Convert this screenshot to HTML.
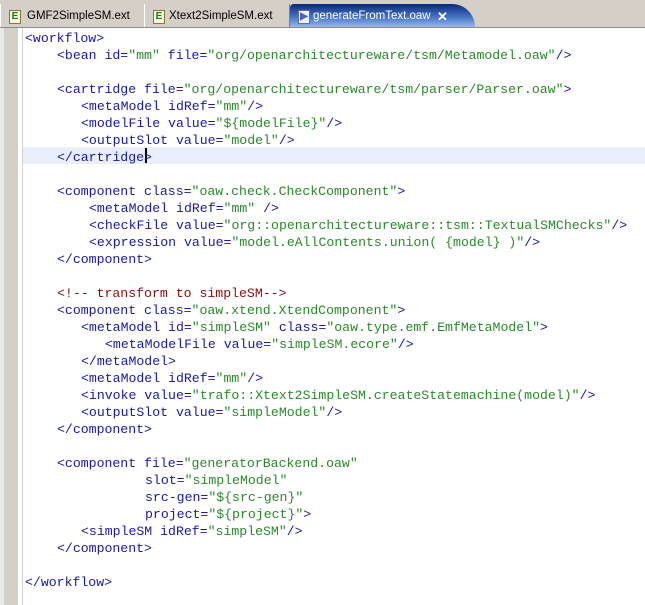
<!DOCTYPE html>
<html><head><style>
body{margin:0;width:645px;height:605px;overflow:hidden;background:#fff;position:relative;font-family:"Liberation Sans",sans-serif}
.tabbar{position:absolute;left:0;top:0;width:645px;height:27px;background:#d4d0c8;border-bottom:1px solid #8a8a8a}
.tab{position:absolute;top:4px;height:23px;font-size:11.5px;line-height:25px;color:#000;border-left:1px solid #fff;border-right:1px solid #808080}
.ico{position:absolute;top:6px;left:8px;width:10px;height:12px;background:#f4f4e0;border:1px solid #8a7a30;font:bold 10px "Liberation Sans";color:#1a7a1a;line-height:12px;text-align:center}
.active{position:absolute;left:290px;top:4px;width:185px;height:23px;background:linear-gradient(#0a2a7a,#4a78c8 60%,#9ab8e8);border-radius:5px 30px 0 0;color:#fff;font-size:11.5px;line-height:25px}
.code{position:absolute;font-family:"Liberation Mono",monospace;font-size:13.2px;white-space:pre;line-height:17px;color:#1a1aa0}
.v{color:#2a8a2a}.c{color:#8a1010}
.l{position:absolute;height:17px}
</style></head><body>
<div class="tabbar">
 <div class="tab" style="left:0;width:143px;"><div class="ico">E</div><span style="position:absolute;left:26px">GMF2SimpleSM.ext</span></div>
 <div class="tab" style="left:144px;width:144px;"><div class="ico">E</div><span style="position:absolute;left:24px">Xtext2SimpleSM.ext</span></div>
 <div class="active"><div class="ico" style="background:#eef;border-color:#6070a0;color:#5060c0">▶</div><span style="position:absolute;left:23px">generateFromText.oaw</span><span style="position:absolute;left:147px;font-weight:bold;font-size:13px">✕</span></div>
</div>
<div style="position:absolute;left:0;top:28px;width:4px;height:577px;background:#e8e8e8"></div>
<div style="position:absolute;left:4px;top:28px;width:14px;height:577px;background:#d4d0c8"></div>
<div style="position:absolute;left:22px;top:28px;width:1px;height:577px;background:#d0d0d0"></div>
<div style="position:absolute;left:23px;top:147px;width:622px;height:17px;background:#e8eefa"></div>
<div style="position:absolute;left:145px;top:148px;width:2px;height:15px;background:#000"></div>
<div class="code" style="left:0;top:30px;width:645px">
<div class="l" style="top:0;left:25px">&lt;workflow&gt;</div>
<div class="l" style="top:17px;left:57px">&lt;bean id=<span class="v">"mm"</span> file=<span class="v">"org/openarchitectureware/tsm/Metamodel.oaw"</span>/&gt;</div>
<div class="l" style="top:51px;left:57px">&lt;cartridge file=<span class="v">"org/openarchitectureware/tsm/parser/Parser.oaw"</span>&gt;</div>
<div class="l" style="top:68px;left:81px">&lt;metaModel idRef=<span class="v">"mm"</span>/&gt;</div>
<div class="l" style="top:85px;left:81px">&lt;modelFile value=<span class="v">"${modelFile}"</span>/&gt;</div>
<div class="l" style="top:102px;left:81px">&lt;outputSlot value=<span class="v">"model"</span>/&gt;</div>
<div class="l" style="top:119px;left:57px">&lt;/cartridge&gt;</div>
<div class="l" style="top:153px;left:57px">&lt;component class=<span class="v">"oaw.check.CheckComponent"</span>&gt;</div>
<div class="l" style="top:170px;left:89px">&lt;metaModel idRef=<span class="v">"mm"</span> /&gt;</div>
<div class="l" style="top:187px;left:89px">&lt;checkFile value=<span class="v">"org::openarchitectureware::tsm::TextualSMChecks"</span>/&gt;</div>
<div class="l" style="top:204px;left:89px">&lt;expression value=<span class="v">"model.eAllContents.union( {model} )"</span>/&gt;</div>
<div class="l" style="top:221px;left:57px">&lt;/component&gt;</div>
<div class="l c" style="top:255px;left:57px">&lt;!-- transform to simpleSM--&gt;</div>
<div class="l" style="top:272px;left:57px">&lt;component class=<span class="v">"oaw.xtend.XtendComponent"</span>&gt;</div>
<div class="l" style="top:289px;left:81px">&lt;metaModel id=<span class="v">"simpleSM"</span> class=<span class="v">"oaw.type.emf.EmfMetaModel"</span>&gt;</div>
<div class="l" style="top:306px;left:105px">&lt;metaModelFile value=<span class="v">"simpleSM.ecore"</span>/&gt;</div>
<div class="l" style="top:323px;left:81px">&lt;/metaModel&gt;</div>
<div class="l" style="top:340px;left:81px">&lt;metaModel idRef=<span class="v">"mm"</span>/&gt;</div>
<div class="l" style="top:357px;left:81px">&lt;invoke value=<span class="v">"trafo::Xtext2SimpleSM.createStatemachine(model)"</span>/&gt;</div>
<div class="l" style="top:374px;left:81px">&lt;outputSlot value=<span class="v">"simpleModel"</span>/&gt;</div>
<div class="l" style="top:391px;left:57px">&lt;/component&gt;</div>
<div class="l" style="top:425px;left:57px">&lt;component file=<span class="v">"generatorBackend.oaw"</span></div>
<div class="l" style="top:442px;left:145px">slot=<span class="v">"simpleModel"</span></div>
<div class="l" style="top:459px;left:145px">src-gen=<span class="v">"${src-gen}"</span></div>
<div class="l" style="top:476px;left:145px">project=<span class="v">"${project}"</span>&gt;</div>
<div class="l" style="top:493px;left:81px">&lt;simpleSM idRef=<span class="v">"simpleSM"</span>/&gt;</div>
<div class="l" style="top:510px;left:57px">&lt;/component&gt;</div>
<div class="l" style="top:544px;left:25px">&lt;/workflow&gt;</div>
</div>
</body></html>
